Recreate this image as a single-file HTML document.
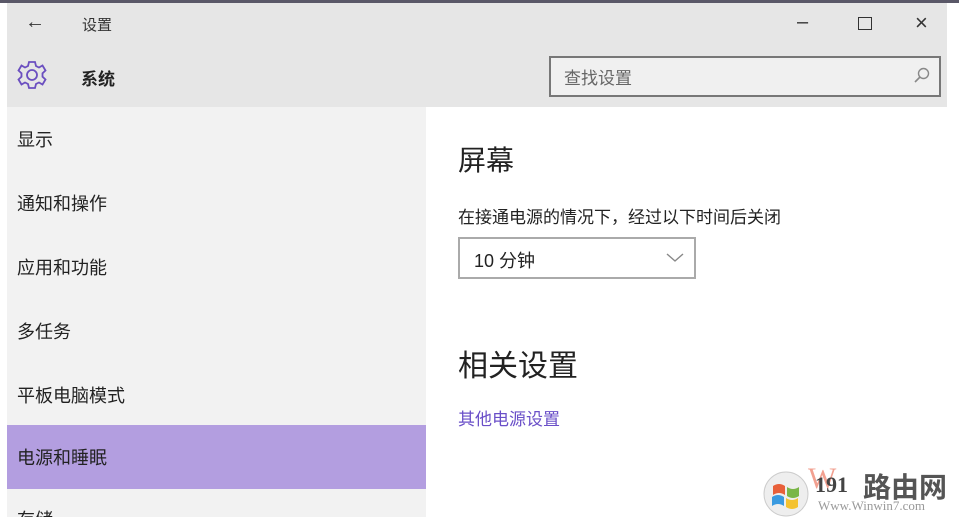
<!DOCTYPE html>
<html><head><meta charset="utf-8">
<style>
*{margin:0;padding:0;box-sizing:border-box}
body{width:959px;height:520px;overflow:hidden;background:#fff;position:relative;font-family:"Liberation Sans","Noto Sans CJK SC",sans-serif;color:#222}
.topline{position:absolute;left:0;top:0;width:959px;height:3px;background:#5a5868}
.hdr{position:absolute;left:7px;top:3px;width:940px;height:104px;background:#e6e6e6}
.side{position:absolute;left:7px;top:107px;width:419px;height:410px;background:#f2f2f2;overflow:hidden}
.item{position:absolute;left:10px;font-size:18px;color:#222;line-height:24px}
.sel{position:absolute;left:0;top:318px;width:419px;height:64px;background:#b39ee0}
.t{position:absolute;white-space:nowrap}
</style></head><body>
<div class="topline"></div>
<div class="hdr">
  <div class="t" style="left:18px;top:8px;font-size:20px;color:#333">←</div>
  <div class="t" style="left:75px;top:11px;font-size:15px;color:#333">设置</div>
  <div class="t" style="left:790px;top:8px;font-size:20px;color:#333">–</div>
  <div style="position:absolute;left:851px;top:14px;width:14px;height:13px;border:1.5px solid #333"></div>
  <div class="t" style="left:908px;top:7px;font-size:22px;color:#333">×</div>
  <svg style="position:absolute;left:10px;top:56px" width="30" height="32" viewBox="0 0 30 32">
    <g fill="none" stroke="#6b4fc0" stroke-width="1.8">
      <path d="M12 3h6l1 4 3 1.5 3.5-2 3 5-3 2.8v3.4l3 2.8-3 5-3.5-2-3 1.5-1 4h-6l-1-4-3-1.5-3.5 2-3-5 3-2.8v-3.4l-3-2.8 3-5 3.5 2 3-1.5z"/>
      <circle cx="15" cy="16" r="5"/>
    </g>
  </svg>
  <div class="t" style="left:74px;top:62px;font-size:17px;font-weight:bold;color:#222">系统</div>
  <div style="position:absolute;left:542px;top:53px;width:392px;height:41px;border:2px solid #777;background:#f0f0f0"></div>
  <div class="t" style="left:557px;top:61px;font-size:17px;color:#666">查找设置</div>
  <svg style="position:absolute;left:906px;top:63px" width="18" height="18" viewBox="0 0 18 18"><circle cx="10.5" cy="7.5" r="5" fill="none" stroke="#888" stroke-width="1.4"/><path d="M7 11L2 16" stroke="#888" stroke-width="1.6"/></svg>
</div>
<div class="side">
<div class="sel"></div>
<div class="item" style="top:21px">显示</div>
<div class="item" style="top:85px">通知和操作</div>
<div class="item" style="top:149px">应用和功能</div>
<div class="item" style="top:213px">多任务</div>
<div class="item" style="top:277px">平板电脑模式</div>
<div class="item" style="top:339px">电源和睡眠</div>
<div class="item" style="top:401px">存储</div>
</div>

<div class="t" style="left:458px;top:139px;font-size:28px;color:#222">屏幕</div>
<div class="t" style="left:458px;top:203px;font-size:17px;color:#222">在接通电源的情况下，经过以下时间后关闭</div>
<div style="position:absolute;left:458px;top:237px;width:238px;height:42px;border:2px solid #aaa;background:#fff"></div>
<div class="t" style="left:474px;top:247px;font-size:18px;color:#222">10 分钟</div>
<svg style="position:absolute;left:666px;top:253px" width="18" height="10" viewBox="0 0 18 10"><path d="M1 1l8 7 8-7" fill="none" stroke="#888" stroke-width="1.4"/></svg>
<div class="t" style="left:458px;top:341px;font-size:30px;color:#222">相关设置</div>
<div class="t" style="left:458px;top:405px;font-size:17px;color:#6a4fc8">其他电源设置</div>

<svg style="position:absolute;left:762px;top:470px" width="48" height="48" viewBox="0 0 48 48">
  <circle cx="24" cy="24" r="22" fill="#eee" stroke="#ccc"/>
  <path d="M11 16q6-4 12 0v9q-6-4-12 0z" fill="#e8603a"/>
  <path d="M25 17q6 4 12 0v9q-6 4-12 0z" fill="#7ab648"/>
  <path d="M10 27q6-4 12 0v9q-6-4-12 0z" fill="#3a9ae0"/>
  <path d="M24 28q6 4 12 0v9q-6 4-12 0z" fill="#f4c230"/>
</svg>
<div class="t" style="left:808px;top:462px;font-size:30px;color:#f2a090;font-family:'Liberation Serif',serif">W</div>
<div class="t" style="left:815px;top:472px;font-size:22px;color:#444;font-family:'Liberation Serif',serif;font-weight:bold">191</div>
<div class="t" style="left:863px;top:466px;font-size:28px;color:#555;font-weight:bold">路由网</div>
<div class="t" style="left:818px;top:498px;font-size:13px;color:#999;font-family:'Liberation Serif',serif">Www.Winwin7.com</div>
</body></html>
